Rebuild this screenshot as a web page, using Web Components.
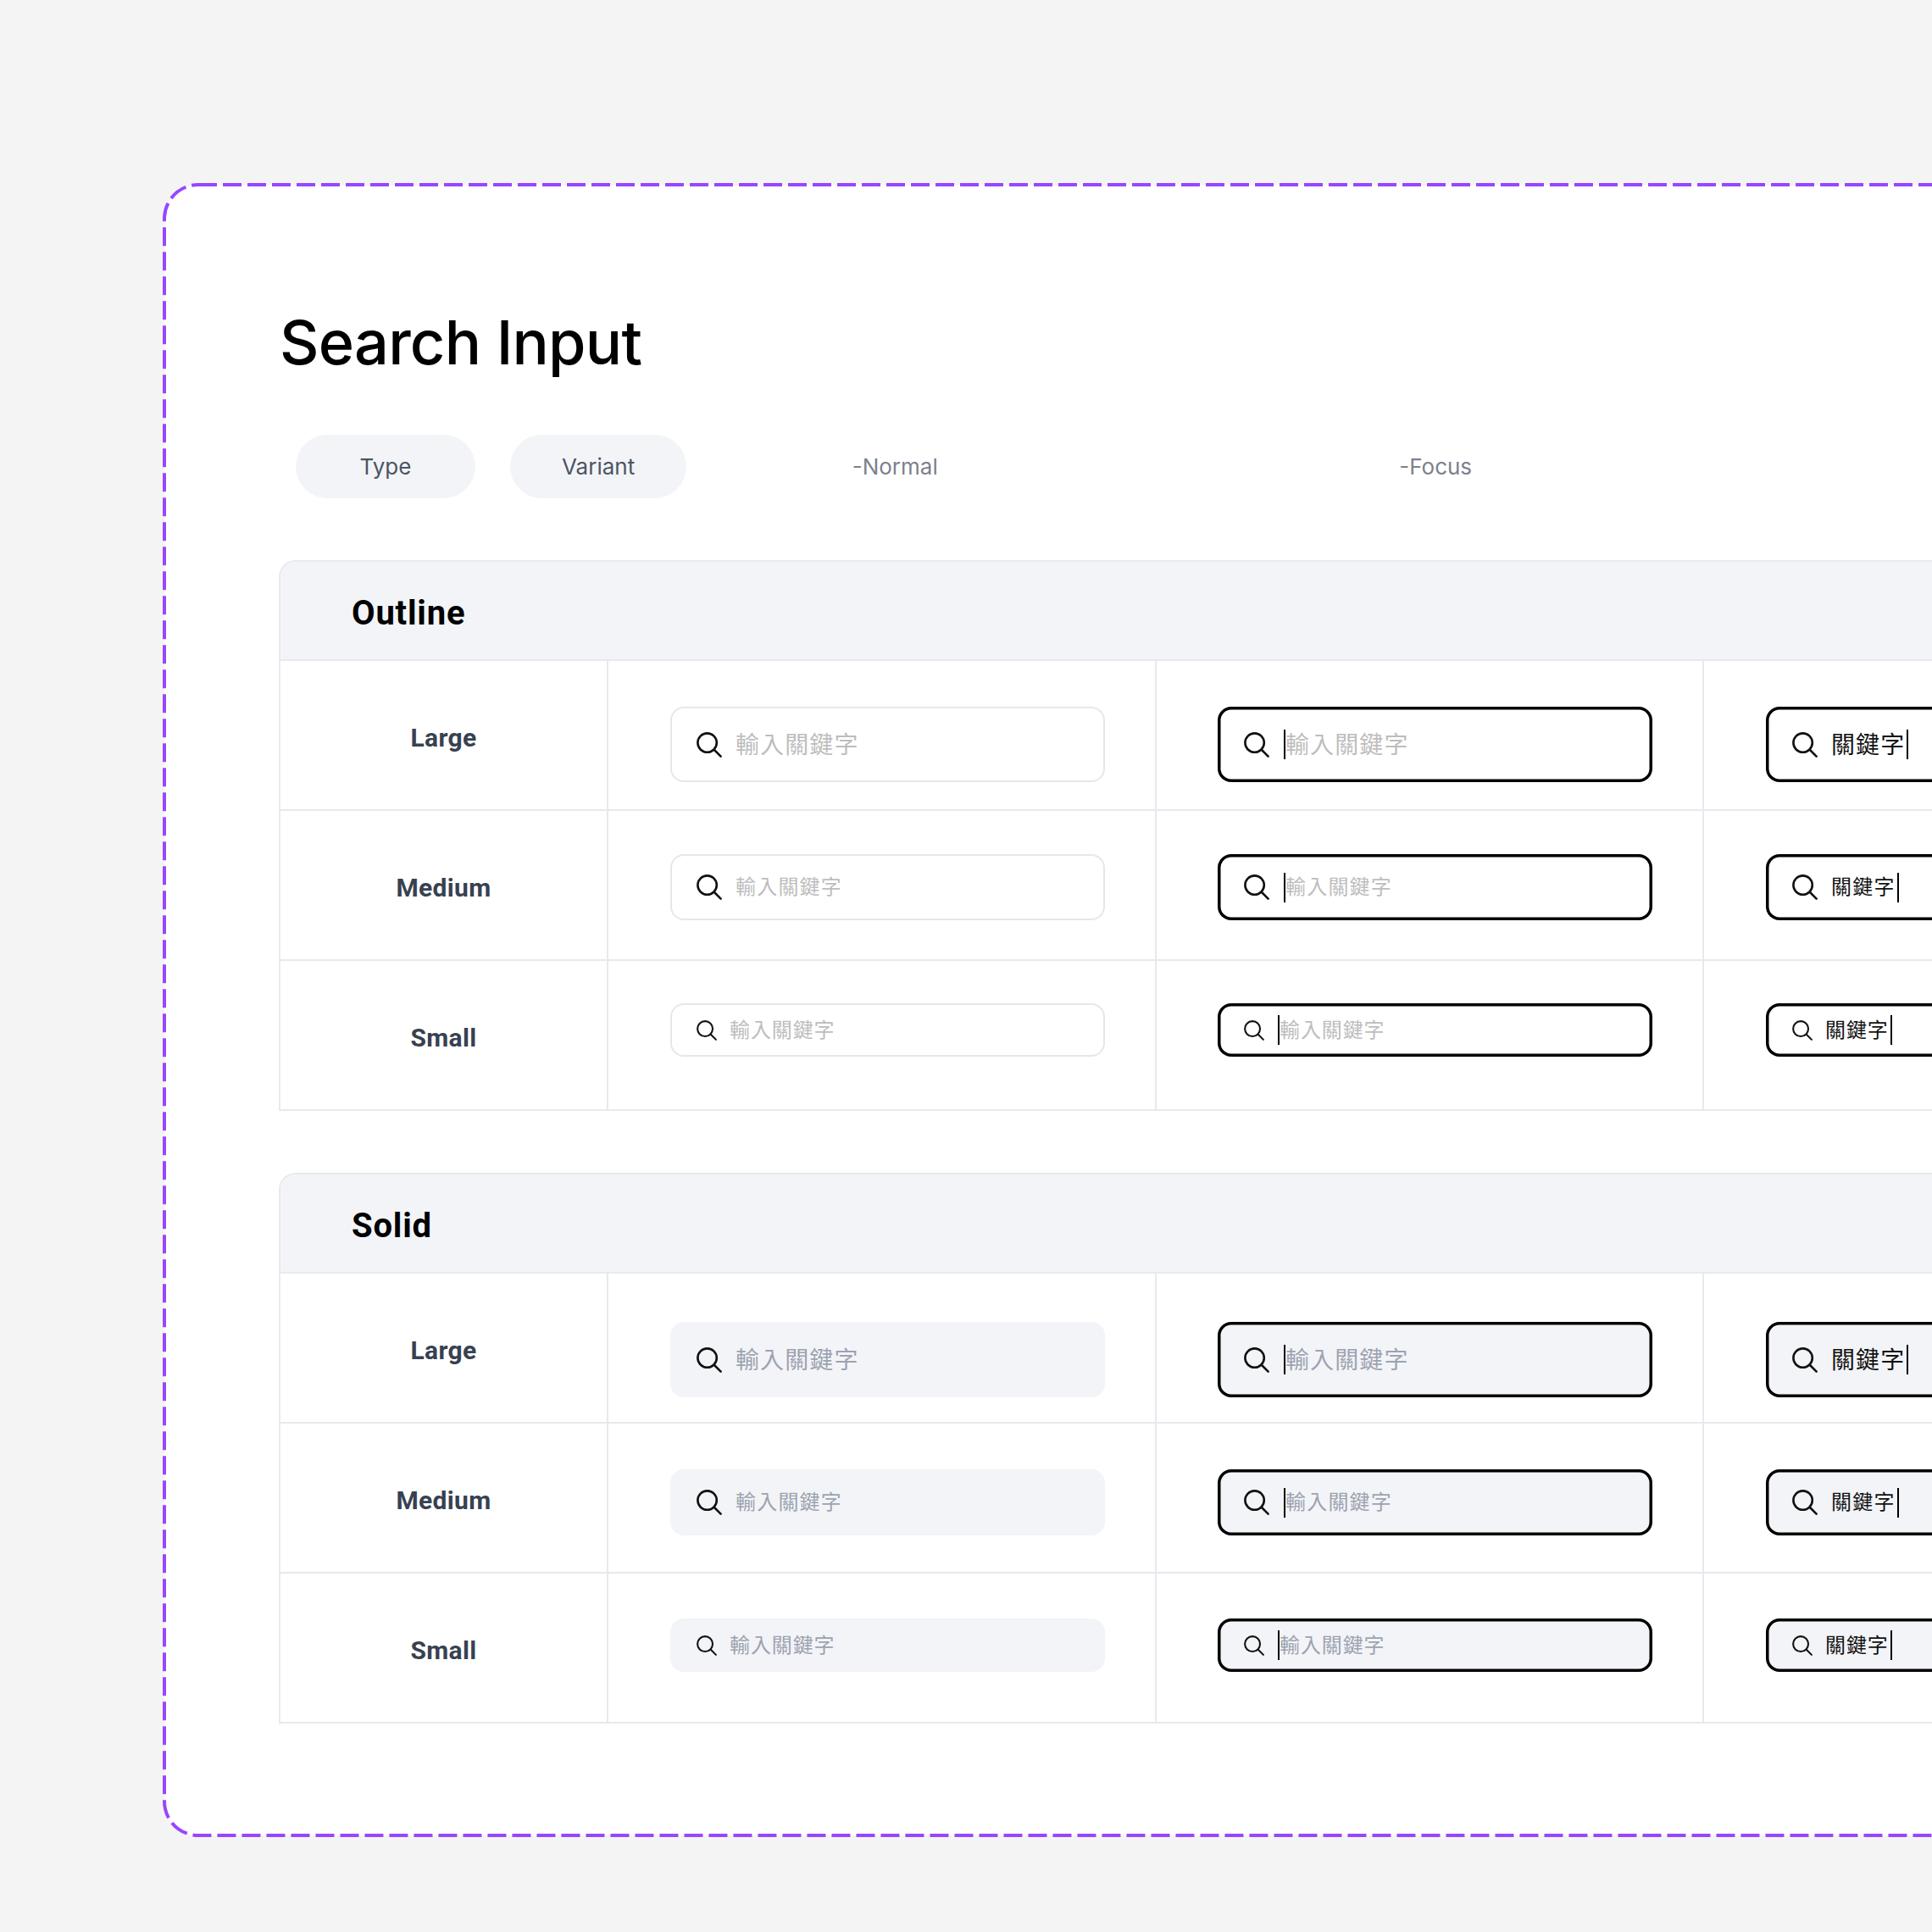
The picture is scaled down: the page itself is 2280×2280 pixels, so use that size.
<!doctype html>
<html lang="zh-Hant">
<head>
<meta charset="utf-8">
<title>Search Input</title>
<style>
  html, body { margin: 0; height: 2280px; overflow: hidden; }
  body {
    background: #f4f4f5;
    display: flex;
    align-items: flex-start;
    padding: 218px 0 0 194px;
    box-sizing: border-box;
    font-family: Inter, "Noto Sans CJK TC", sans-serif;
  }
</style>
</head>
<body>
<spec-card>
  <span slot="title">Search Input</span>
  <spec-legend>
    <legend-pill wide>Type</legend-pill>
    <legend-pill>Variant</legend-pill>
    <span slot="states">-Normal</span>
    <span slot="states">-Focus</span>
  </spec-legend>
  <spec-table variant="outline">Outline</spec-table>
  <spec-table variant="solid">Solid</spec-table>
</spec-card>

<script>
const ICON = `<svg viewBox="0 0 30 30" fill="none" stroke="currentColor" stroke-width="2.6" stroke-linecap="round"><circle cx="12.6" cy="12.6" r="11.2"/><path d="M21 21l7.6 7.6"/></svg>`;

// top offset of the field inside each row, taken per variant
const ROW_PAD = {
  outline: { large: 54, medium: 51, small: 50 },
  solid: { large: 57, medium: 54, small: 53 },
};
const SIZES = [['large', 'Large'], ['medium', 'Medium'], ['small', 'Small']];
const PLACEHOLDER = '輸入關鍵字';
const VALUE = '關鍵字';

class SpecCard extends HTMLElement {
  constructor() {
    super();
    this.attachShadow({ mode: 'open' }).innerHTML = `
<style>
  :host {
    display: flex;
    flex-direction: column;
    flex: none;
    position: relative;
    box-sizing: border-box;
    width: 2600px;
    height: 1948px;
    padding: 142px 0 0 135px;
    background: #fff;
    border-radius: 40px;
  }
  .title {
    margin: 0 0 65px 1px;
    font: 500 72px/88px Inter, sans-serif;
    letter-spacing: -.75px;
    color: #000;
  }
  .dash {
    position: absolute;
    inset: 0;
    width: 100%;
    height: 100%;
    overflow: visible;
    pointer-events: none;
  }
</style>
<svg class="dash"><rect width="100%" height="100%" rx="40" fill="none" stroke="#9747ff" stroke-width="4" stroke-dasharray="22 7"/></svg>
<h1 class="title"><slot name="title"></slot></h1>
<slot></slot>`;
  }
}

class SpecLegend extends HTMLElement {
  constructor() {
    super();
    this.attachShadow({ mode: 'open' }).innerHTML = `
<style>
  :host {
    display: flex;
    align-items: center;
    height: 75px;
    margin-bottom: 73px;
    padding-left: 20px;
  }
  .pills { display: flex; gap: 41px; }
  .states {
    display: grid;
    grid-template-columns: 492px 492px;
    column-gap: 146px;
    text-align: center;
    font: 400 26px/32px Inter, sans-serif;
    color: #7b818d;
  }
  ::slotted(span) { display: block; }
</style>
<div class="pills"><slot></slot></div>
<div class="states"><slot name="states"></slot></div>`;
  }
}

class LegendPill extends HTMLElement {
  constructor() {
    super();
    this.attachShadow({ mode: 'open' }).innerHTML = `
<style>
  :host {
    display: flex;
    align-items: center;
    justify-content: center;
    box-sizing: border-box;
    height: 75px;
    padding: 0 61px;
    border-radius: 38px;
    background: #f3f4f8;
    font: 400 26px/32px Inter, sans-serif;
    color: #4b5563;
  }
  :host([wide]) { min-width: 212px; }
</style>
<slot></slot>`;
  }
}

class SearchField extends HTMLElement {
  constructor() {
    super();
    this.attachShadow({ mode: 'open' }).innerHTML = `
<style>
  :host {
    --lift: 3px;
    display: flex;
    align-items: center;
    box-sizing: border-box;
    width: 513px;
    height: 89px;
    padding: 0 0 var(--lift) 31px;
    border-radius: 16px;
    box-shadow: inset 0 0 0 2px #e5e7eb;
    font: 400 28px/36px "Noto Sans CJK TC", sans-serif;
    letter-spacing: 1.1px;
    color: #bdbdbd;
    white-space: nowrap;
  }
  :host([size="medium"]) { --lift: 5px; height: 78px; font-size: 24px; letter-spacing: 1.2px; }
  :host([size="small"]) { height: 63px; font-size: 24px; letter-spacing: .9px; }
  :host([variant="solid"]) { background: #f3f4f8; box-shadow: none; color: #9ca3af; }
  :host([state="focus"]), :host([state="typing"]) { box-shadow: inset 0 0 0 3.5px #000; }
  :host([state="typing"]) { color: #111; }

  .icon { flex: none; width: 30px; height: 30px; margin: var(--lift) 16px 0 0; color: #111; line-height: 0; }
  :host([size="small"]) .icon { width: 24px; height: 24px; margin-right: 15px; }
  .icon svg { display: block; width: 100%; height: 100%; }

  .caret { display: none; flex: none; width: 2px; height: 35px; margin-top: var(--lift); background: #000; }
  :host([state="focus"]) .before { display: block; margin-left: 1px; }
  :host([state="typing"]) .after { display: block; margin-left: 2px; }
</style>
<span class="icon">${ICON}</span>
<span class="caret before"></span>
<slot></slot>
<span class="caret after"></span>`;
  }
}

class SpecTable extends HTMLElement {
  constructor() {
    super();
    this.attachShadow({ mode: 'open' }).innerHTML = `
<style>
  :host {
    display: block;
    box-sizing: border-box;
    margin-bottom: 73px;
    border: solid #e8e9ee;
    border-width: 2px 0 0 2px;
    border-top-left-radius: 20px;
    overflow: hidden;
  }
  .head {
    box-sizing: border-box;
    height: 117px;
    padding: 7px 0 0 84px;
    display: flex;
    align-items: center;
    background: #f3f4f8;
    border-bottom: 2px solid #e8e9ee;
    font: 700 40px/48px Roboto, sans-serif;
    letter-spacing: .8px;
    color: #000;
  }
  .rows { display: flex; flex-direction: column; }
</style>
<div class="head"><slot></slot></div>
<div class="rows"></div>`;
  }

  connectedCallback() {
    const variant = this.getAttribute('variant');
    const rows = this.shadowRoot.querySelector('.rows');
    rows.innerHTML = '';
    for (const [size, label] of SIZES) {
      const row = document.createElement('spec-row');
      row.setAttribute('label', label);
      row.style.setProperty('--row-pad', ROW_PAD[variant][size] + 'px');
      for (const [state, text] of [['normal', PLACEHOLDER], ['focus', PLACEHOLDER], ['typing', VALUE]]) {
        const cell = document.createElement('spec-cell');
        const field = document.createElement('search-field');
        field.setAttribute('size', size);
        field.setAttribute('variant', variant);
        field.setAttribute('state', state);
        field.textContent = text;
        cell.appendChild(field);
        row.appendChild(cell);
      }
      rows.appendChild(row);
    }
  }
}

class SpecRow extends HTMLElement {
  constructor() {
    super();
    this.attachShadow({ mode: 'open' }).innerHTML = `
<style>
  :host {
    display: grid;
    grid-template-columns: 387px 647px 646px 647px;
    box-sizing: border-box;
    height: 177px;
    border-bottom: 2px solid #e8e9ee;
  }
  .label {
    display: flex;
    align-items: center;
    justify-content: center;
    padding-top: 6px;
    box-sizing: border-box;
    border-right: 2px solid #e8e9ee;
    font: 700 30px/36px Roboto, sans-serif;
    letter-spacing: .3px;
    color: #374151;
  }
  .cells { display: contents; }
  ::slotted(spec-cell:nth-child(odd)) { padding-left: 73px; }
</style>
<div class="label"></div>
<div class="cells"><slot></slot></div>`;
  }

  connectedCallback() {
    this.shadowRoot.querySelector('.label').textContent = this.getAttribute('label');
  }
}

class SpecCell extends HTMLElement {
  constructor() {
    super();
    this.attachShadow({ mode: 'open' }).innerHTML = `
<style>
  :host {
    display: block;
    box-sizing: border-box;
    padding: var(--row-pad) 0 0 72px;
    border-right: 2px solid #e8e9ee;
  }
</style>
<slot></slot>`;
  }
}

customElements.define('spec-card', SpecCard);
customElements.define('spec-legend', SpecLegend);
customElements.define('legend-pill', LegendPill);
customElements.define('search-field', SearchField);
customElements.define('spec-table', SpecTable);
customElements.define('spec-row', SpecRow);
customElements.define('spec-cell', SpecCell);
</script>
</body>
</html>
